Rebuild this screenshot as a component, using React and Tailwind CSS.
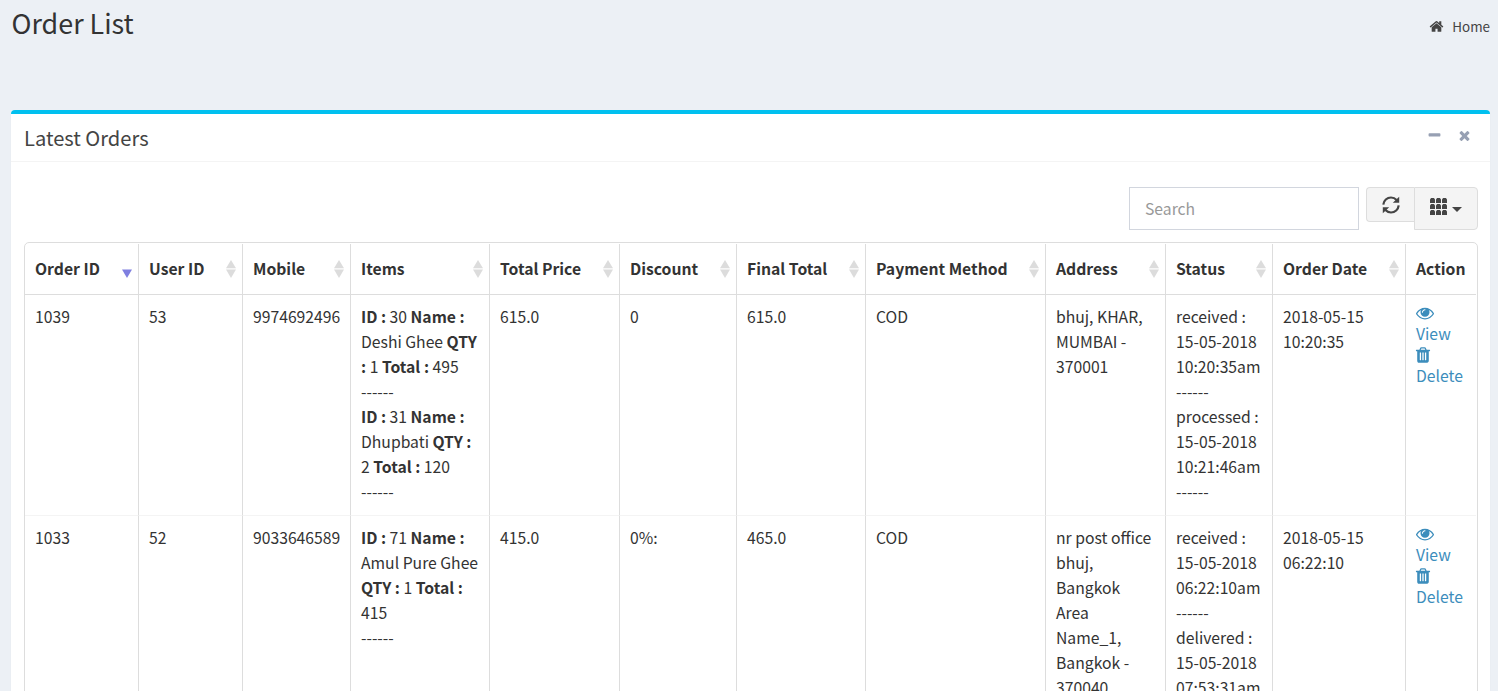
import React from "react";

const PATHS = {
  home: "M1472 992v480q0 26-19 45t-45 19h-384v-384h-256v384h-384q-26 0-45-19t-19-45v-480q0-1 .5-3t.5-3l575-474 575 474q1 2 1 6zm223-69l-62 74q-8 9-21 11h-3q-13 0-21-7l-692-577-692 577q-12 8-24 7-13-2-21-11l-62-74q-8-10-7-23.5t11-21.5l719-599q32-26 76-26t76 26l244 204v-195q0-14 9-23t23-9h192q14 0 23 9t9 23v408l219 182q10 8 11 21.5t-7 23.5z",
  minus: "M1600 736v192q0 40-28 68t-68 28h-1216q-40 0-68-28t-28-68v-192q0-40 28-68t68-28h1216q40 0 68 28t28 68z",
  times: "M1490 1322q0 40-28 68l-136 136q-28 28-68 28t-68-28l-294-294-294 294q-28 28-68 28t-68-28l-136-136q-28-28-28-68t28-68l294-294-294-294q-28-28-28-68t28-68l136-136q28-28 68-28t68 28l294 294 294-294q28-28 68-28t68 28l136 136q28 28 28 68t-28 68l-294 294 294 294q28 28 28 68z",
  eye: "M1664 960q-152-236-381-353 61 104 61 225 0 185-131.5 316.5t-316.5 131.5-316.5-131.5-131.5-316.5q0-121 61-225-229 117-381 353 133 205 333.5 326.5t434.5 121.5 434.5-121.5 333.5-326.5zm-720-384q0-20-14-34t-34-14q-125 0-214.5 89.5t-89.5 214.5q0 20 14 34t34 14 34-14 14-34q0-86 61-147t147-61q20 0 34-14t14-34zm848 384q0 34-20 69-140 230-376.5 368.5t-499.5 138.5-499.5-139-376.5-368q-20-35-20-69t20-69q140-229 376.5-368t499.5-139 499.5 139 376.5 368q20 35 20 69z",
  trash: "M704 1376v-704q0-14-9-23t-23-9h-64q-14 0-23 9t-9 23v704q0 14 9 23t23 9h64q14 0 23-9t9-23zm256 0v-704q0-14-9-23t-23-9h-64q-14 0-23 9t-9 23v704q0 14 9 23t23 9h64q14 0 23-9t9-23zm256 0v-704q0-14-9-23t-23-9h-64q-14 0-23 9t-9 23v704q0 14 9 23t23 9h64q14 0 23-9t9-23zm-544-992h448l-48-117q-7-9-17-11h-317q-10 2-17 11zm928 32v64q0 14-9 23t-23 9h-96v948q0 83-47 143.5t-113 60.5h-832q-66 0-113-58.5t-47-141.5v-952h-96q-14 0-23-9t-9-23v-64q0-14 9-23t23-9h309l70-167q15-37 54-63t79-26h320q40 0 79 26t54 63l70 167h309q14 0 23 9t9 23z",
};

function Icon({ name, className }) {
  return (
    <svg viewBox="0 0 1792 1792" fill="currentColor" className={className}>
      <path d={PATHS[name]} />
    </svg>
  );
}

function RefreshIcon() {
  return (
    <svg viewBox="0 0 18 18" className="block size-[18px]" fill="none" stroke="#444" strokeWidth="2.2">
      <path d="M1.3 8.6C1.7 4.6 5 1.5 9 1.5c2.2 0 4.2.9 5.6 2.4" />
      <path d="M16.7 9.4c-.4 4-3.7 7.1-7.7 7.1-2.2 0-4.2-.9-5.6-2.4" />
      <path d="M17.2.8v6h-6.4zM.8 17.2v-6h6.4z" fill="#444" stroke="none" />
    </svg>
  );
}

function GridIcon() {
  return (
    <svg viewBox="0 0 17 17" className="block size-[17px]" fill="#444">
      {[0, 6, 12].map((y) =>
        [0, 6, 12].map((x) => (
          <path key={`${x}-${y}`} transform={`translate(${x} ${y})`} d="M0 5V1.2L1.2 0h2.6L5 1.2V5z" />
        ))
      )}
    </svg>
  );
}

const COLUMNS = [
  { label: "Order ID", width: "w-[114px]", sort: "desc" },
  { label: "User ID", width: "w-[104px]", sort: "both" },
  { label: "Mobile", width: "w-[108px]", sort: "both" },
  { label: "Items", width: "w-[139px]", sort: "both" },
  { label: "Total Price", width: "w-[130px]", sort: "both" },
  { label: "Discount", width: "w-[117px]", sort: "both" },
  { label: "Final Total", width: "w-[129px]", sort: "both" },
  { label: "Payment Method", width: "w-[180px]", sort: "both" },
  { label: "Address", width: "w-[120px]", sort: "both" },
  { label: "Status", width: "w-[107px]", sort: "both" },
  { label: "Order Date", width: "w-[133px]", sort: "both" },
  { label: "Action", width: "w-[70px]" },
];

// Text between asterisks is drawn in bold.
const ROWS = [
  [
    ["1039"],
    ["53"],
    ["9974692496"],
    ["*ID :* 30 *Name :*", "Deshi Ghee *QTY*", "*:* 1 *Total :* 495", "------", "*ID :* 31 *Name :*", "Dhupbati *QTY :*", "2 *Total :* 120", "------"],
    ["615.0"],
    ["0"],
    ["615.0"],
    ["COD"],
    ["bhuj, KHAR,", "MUMBAI -", "370001"],
    ["received :", "15-05-2018", "10:20:35am", "------", "processed :", "15-05-2018", "10:21:46am", "------"],
    ["2018-05-15", "10:20:35"],
  ],
  [
    ["1033"],
    ["52"],
    ["9033646589"],
    ["*ID :* 71 *Name :*", "Amul Pure Ghee", "*QTY :* 1 *Total :*", "415", "------"],
    ["415.0"],
    ["0%:"],
    ["465.0"],
    ["COD"],
    ["nr post office", "bhuj,", "Bangkok", "Area", "Name_1,", "Bangkok -", "370040"],
    ["received :", "15-05-2018", "06:22:10am", "------", "delivered :", "15-05-2018", "07:53:31am"],
    ["2018-05-15", "06:22:10"],
  ],
];

function Line({ text }) {
  return (
    <div>
      {text.split("*").map((part, i) => (i % 2 ? <b key={i}>{part}</b> : <span key={i}>{part}</span>))}
    </div>
  );
}

function SortArrows({ sort }) {
  return (
    <svg viewBox="0 0 10 18" className="h-[18px] w-[10px] shrink-0">
      {sort === "both" && <path d="M5 0l5 8.3H0z" fill="#dcdcdc" />}
      <path d="M0 9.5h10L5 18z" fill={sort === "both" ? "#dcdcdc" : "#7f7fe0"} />
    </svg>
  );
}

function ActionLinks() {
  return (
    <div className="-mt-[2px] flex flex-col leading-[21px] text-[#3c8dbc]">
      <a className="flex flex-col">
        <span className="flex h-[21px] items-center"><Icon name="eye" className="size-[18px]" /></span>
        <span>View</span>
      </a>
      <a className="flex flex-col">
        <span className="flex h-[21px] items-center"><Icon name="trash" className="-ml-[2px] size-[18px]" /></span>
        <span>Delete</span>
      </a>
    </div>
  );
}

export default function App() {
  return (
    <div className="h-[691px] overflow-hidden bg-[#ecf0f5] pr-2 pl-[11px] font-['Noto_Sans_CJK_SC','Open_Sans',sans-serif] text-[15.72px] leading-[25px] text-[#333]">
      <header className="flex h-[110px] items-start justify-between">
        <h1 className="pt-[3px] pl-[0.5px] text-[26.9px] leading-[40px]">Order List</h1>
        <nav className="flex items-center pt-[14px] text-[13.4px] text-[#444]">
          <Icon name="home" className="mr-2 size-[15px]" />
          <span>Home</span>
        </nav>
      </header>

      <section className="h-[700px] rounded-[4px] border-t-4 border-[#00c0ef] bg-white shadow-[0_1px_1px_rgba(0,0,0,0.1)]">
        <div className="flex h-12 items-center justify-between border-b border-[#f4f4f4] pr-[18px] pl-[13px]">
          <h3 className="text-[20.1px] text-[#444]">Latest Orders</h3>
          <div className="flex gap-[15px] pb-[4px] text-[#97a0b3]">
            <Icon name="minus" className="size-[15px]" />
            <Icon name="times" className="size-[15px]" />
          </div>
        </div>

        <div className="px-[12px] pt-[25px]">
          <div className="flex items-start justify-end">
            <div className="flex h-[43px] w-[230px] items-center border border-[#d2d6de] px-[15px] text-[#999]">Search</div>
            <div className="ml-[7px] flex items-start text-[#444]">
              <div className="flex h-[35px] w-[48px] items-center justify-center rounded-l-[4px] border border-r-0 border-[#ddd] bg-[#f4f4f4]">
                <RefreshIcon />
              </div>
              <div className="flex h-[43px] w-[64px] items-center justify-center gap-[5px] rounded-r-[4px] border border-[#ddd] bg-[#f4f4f4] pb-[4px]">
                <GridIcon />
                <svg viewBox="0 0 10 5" className="mt-[5px] h-[5px] w-[10px]" fill="#444"><path d="M0 0h10L5 5z" /></svg>
              </div>
            </div>
          </div>

          <div className="mt-3 ml-px h-[600px] w-[1454px] rounded-[5px] border border-[#ddd] pt-px">
            <table className="w-[1451px] table-fixed border-separate border-spacing-0">
              <thead>
                <tr>
                  {COLUMNS.map((c) => (
                    <th key={c.label} className={`${c.width} h-[51px] border-r border-b border-[#ddd] p-0 pr-[6.5px] pl-[10px] last:border-r-0 last:pr-0`}>
                      <div className="flex items-center justify-between whitespace-nowrap">
                        <span className="pb-[2px]">{c.label}</span>
                        {c.sort && <SortArrows sort={c.sort} />}
                      </div>
                    </th>
                  ))}
                </tr>
              </thead>
              <tbody>
                {ROWS.map((row, r) => (
                  <tr key={r}>
                    {row.map((lines, i) => (
                      <td key={i} className="border-r border-b border-r-[#ddd] border-b-[#f4f4f4] pt-[9px] pr-0 pb-[11px] pl-[10px] align-top whitespace-nowrap">
                        {lines.map((t, k) => <Line key={k} text={t} />)}
                      </td>
                    ))}
                    <td className="border-b border-[#f4f4f4] pt-[9px] pr-0 pb-[11px] pl-[10px] align-top">
                      <ActionLinks />
                    </td>
                  </tr>
                ))}
              </tbody>
            </table>
          </div>
        </div>
      </section>
    </div>
  );
}
